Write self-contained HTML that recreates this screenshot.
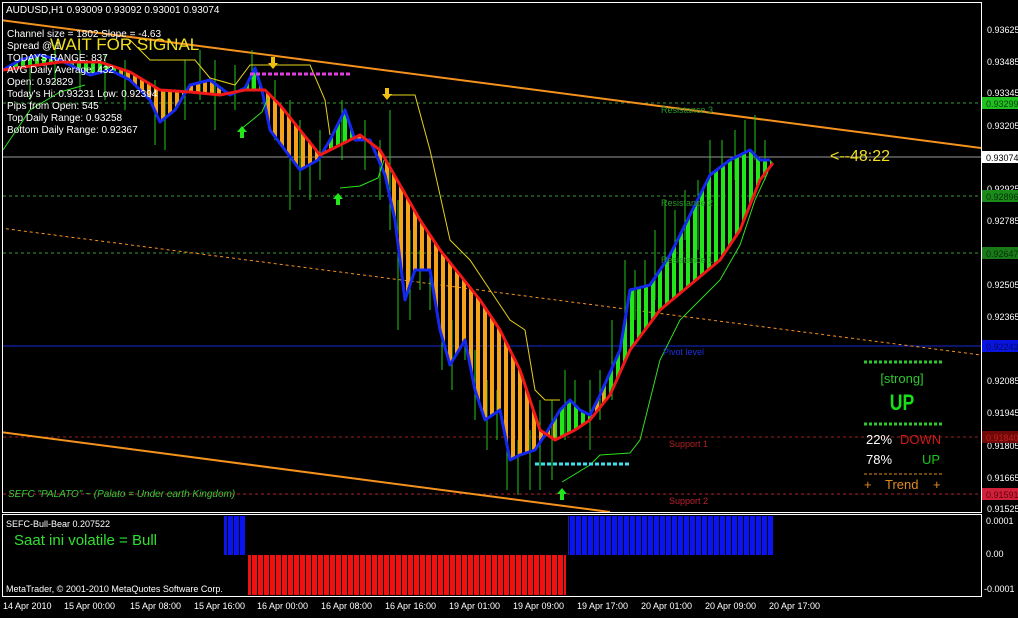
<!DOCTYPE html><html><head><meta charset="utf-8"><style>
body{margin:0;background:#000;width:1018px;height:613px;overflow:hidden;font-family:"Liberation Sans",sans-serif}
svg text{font-family:"Liberation Sans",sans-serif}
</style></head><body>
<svg width="1018" height="613" xmlns="http://www.w3.org/2000/svg">
<defs>
<pattern id="po" width="7" height="10" patternUnits="userSpaceOnUse"><rect width="4" height="10" fill="#f5a21b"/></pattern>
<pattern id="pg" width="7" height="10" patternUnits="userSpaceOnUse"><rect width="4" height="10" fill="#22e51a"/></pattern>
<pattern id="pb" width="6" height="10" patternUnits="userSpaceOnUse"><rect width="5" height="10" fill="#0a14f0"/></pattern>
<pattern id="pr" width="6" height="10" patternUnits="userSpaceOnUse"><rect width="5" height="10" fill="#f01010"/></pattern>
<clipPath id="cg"><rect x="3" y="0" width="117" height="600"/><rect x="225" y="0" width="37" height="600"/><rect x="330" y="0" width="25" height="600"/><rect x="555" y="0" width="40" height="600"/><rect x="605" y="0" width="170" height="600"/></clipPath>
<clipPath id="area"><rect x="3" y="3" width="978" height="509"/></clipPath>
<path id="fillp" d="M3 70L20 60L40 55L60 60L90 75L110 70L130 80L150 100L160 122L175 110L190 85L210 80L230 95L245 88L255 68L262 90L270 130L285 150L300 170L318 160L330 140L345 110L355 140L370 140L385 175L395 220L405 300L415 270L430 270L440 330L450 365L465 340L475 390L485 420L500 410L510 460L520 455L535 450L545 435L560 410L570 400L580 410L590 415L600 395L620 350L630 290L650 285L670 255L690 215L710 175L730 160L750 150L760 160L770 160L773 163L760 180L740 230L720 260L690 285L660 310L630 350L610 395L590 420L575 430L555 440L540 430L520 370L500 330L480 300L460 275L440 250L420 220L400 185L380 150L360 135L340 145L320 155L300 130L280 105L265 90L245 90L220 95L190 92L160 90L130 72L100 62L60 62Z"/>
</defs>
<rect x="2.5" y="2.5" width="979" height="510" fill="none" stroke="#fff"/>
<rect x="2.5" y="514.5" width="979" height="82" fill="none" stroke="#fff"/>
<g clip-path="url(#area)">
<line x1="3" y1="157" x2="981" y2="157" stroke="#999"/>
<line x1="3" y1="103" x2="981" y2="103" stroke="#3a9a3a" stroke-dasharray="3,3"/>
<line x1="3" y1="196" x2="981" y2="196" stroke="#3a9a3a" stroke-dasharray="3,3"/>
<line x1="3" y1="253" x2="981" y2="253" stroke="#3a9a3a" stroke-dasharray="3,3"/>
<line x1="3" y1="346" x2="981" y2="346" stroke="#1a2ad0"/>
<line x1="3" y1="437" x2="981" y2="437" stroke="#9a2020" stroke-dasharray="3,3"/>
<line x1="3" y1="494" x2="981" y2="494" stroke="#b02030" stroke-dasharray="3,3"/>
<line x1="0" y1="20" x2="981" y2="148" stroke="#f5921e" stroke-width="2"/>
<line x1="0" y1="432" x2="610" y2="512" stroke="#f5921e" stroke-width="2"/>
<line x1="0" y1="228" x2="981" y2="355" stroke="#f5921e" stroke-dasharray="3,3"/>
<g stroke="#22c81a" stroke-width="1">
<path d="M30 60V100M55 45V85M80 50V90M105 55V100M125 60V110M155 80V145M165 90V150M185 60V120M200 50V100M215 60V130M235 65V110M252 50V90M275 80V140M290 100V210M300 120V190M310 140V200M320 130V180M342 100V160M365 120V170M380 140V200M390 110V230M398 200V330M410 230V320M420 250V290M430 260V310M442 300V370M452 320V390M465 320V360M475 350V420M487 380V450M497 390V440M507 420V490M518 440V495M530 430V490M540 400V490M552 400V480M565 370V440M575 380V430M590 380V450M600 370V420M612 320V400M625 260V330M635 270V320M645 260V300M655 230V300M665 200V260M675 210V260M685 190V240M698 180V250M710 140V210M722 140V200M735 130V180M745 120V170M755 115V160M765 140V180"/>
</g>
<use href="#fillp" fill="url(#po)"/>
<use href="#fillp" fill="url(#pg)" clip-path="url(#cg)"/>
<path d="M3 70L20 60L40 55L60 60L90 75L110 70L130 80L150 100L160 122L175 110L190 85L210 80L230 95L245 88L255 68L262 90L270 130L285 150L300 170L318 160L330 140L345 110L355 140L370 140L385 175L395 220L405 300L415 270L430 270L440 330L450 365L465 340L475 390L485 420L500 410L510 460L520 455L535 450L545 435L560 410L570 400L580 410L590 415L600 395L620 350L630 290L650 285L670 255L690 215L710 175L730 160L750 150L760 160L770 160" fill="none" stroke="#1428f0" stroke-width="3" stroke-linejoin="round"/>
<path d="M3 70L60 62L100 62L130 72L160 90L190 92L220 95L245 90L265 90L280 105L300 130L320 155L340 145L360 135L380 150L400 185L420 220L440 250L460 275L480 300L500 330L520 370L540 430L555 440L575 430L590 420L610 395L630 350L660 310L690 285L720 260L740 230L760 180L773 163" fill="none" stroke="#f01818" stroke-width="3" stroke-linejoin="round"/>
<path d="M130 40L150 60L195 60L210 78L235 85L250 65L310 65L325 100L330 135M385 95L415 95L430 150L450 240L470 260L490 290L510 320L525 330L535 390L545 400L560 400" fill="none" stroke="#e6d21a" stroke-width="1"/>
<path d="M3 150L30 110L60 92L85 85M240 130L262 112L268 98M340 188L360 186L378 178L384 160M562 482L590 465L600 455L630 453L640 440L650 400L660 360L680 320L700 300L720 280L740 245L755 200L768 172" fill="none" stroke="#2ee020" stroke-width="1"/>
<line x1="250" y1="74" x2="350" y2="74" stroke="#e040e0" stroke-width="3" stroke-dasharray="4,2"/>
<line x1="535" y1="464" x2="630" y2="464" stroke="#40e0f0" stroke-width="3" stroke-dasharray="4,2"/>
<g fill="#f0c010"><path d="M271 57h4v6h3l-5 6-5-6h3z"/><path d="M385 88h4v6h3l-5 6-5-6h3z"/></g>
<g fill="#22e51a"><path d="M242 126l5 6h-3v6h-4v-6h-3z"/><path d="M338 193l5 6h-3v6h-4v-6h-3z"/><path d="M562 488l5 6h-3v6h-4v-6h-3z"/></g>
</g>
<g font-size="10" fill="#fff">
<text x="6" y="13">AUDUSD,H1  0.93009 0.93092 0.93001 0.93074</text>
<text x="7" y="37">Channel size = 1802 Slope = -4.63</text>
<text x="7" y="49">Spread @ 1</text>
<text x="7" y="61">TODAYS RANGE: 837</text>
<text x="7" y="73">AVG Daily Average: 432</text>
<text x="7" y="85">Open: 0.92829</text>
<text x="7" y="97">Today's Hi: 0.93231  Low: 0.92394</text>
<text x="7" y="109">Pips from Open: 545</text>
<text x="7" y="121">Top Daily Range: 0.93258</text>
<text x="7" y="133">Bottom Daily Range: 0.92367</text>
</g>
<text x="50" y="50" font-size="17" fill="#f0e020">WAIT FOR SIGNAL</text>
<g font-size="9">
<text x="661" y="113" fill="#2a9a2a">Resistance 3</text>
<text x="661" y="206" fill="#2a9a2a">Resistance 2</text>
<text x="661" y="263" fill="#2a9a2a">Resistance 1</text>
<text x="663" y="355" fill="#2030e0">Pivot level</text>
<text x="669" y="447" fill="#b02020">Support 1</text>
<text x="669" y="504" fill="#c02030">Support 2</text>
</g>
<text x="830" y="161" font-size="16" fill="#f0e020">&lt;--48:22</text>
<text x="8" y="497" font-size="10" font-style="italic" fill="#3ac83a" font-family="Liberation Serif">SEFC "PALATO" ~ (Palato = Under earth Kingdom)</text>
<line x1="864" y1="362" x2="942" y2="362" stroke="#2ec82e" stroke-width="3" stroke-dasharray="3,2"/>
<line x1="864" y1="424" x2="942" y2="424" stroke="#2ec82e" stroke-width="3" stroke-dasharray="3,2"/>
<line x1="864" y1="474" x2="942" y2="474" stroke="#e08a20" stroke-width="1" stroke-dasharray="3,2"/>
<text x="902" y="383" font-size="13" fill="#2ec82e" text-anchor="middle">[strong]</text>
<text x="902" y="410" font-size="22" font-weight="bold" fill="#18e018" text-anchor="middle" transform="translate(902 0) scale(0.8 1) translate(-902 0)">UP</text>
<text x="866" y="444" font-size="13" fill="#fff">22%</text><text x="900" y="444" font-size="13" fill="#d01818">DOWN</text>
<text x="866" y="464" font-size="13" fill="#fff">78%</text><text x="922" y="464" font-size="13" fill="#18c818">UP</text>
<text x="864" y="489" font-size="13" fill="#e08a20">+</text><text x="885" y="489" font-size="13" fill="#e08a20">Trend</text><text x="933" y="489" font-size="13" fill="#e08a20">+</text>
<g font-size="9" fill="#fff">
<text x="987" y="33">0.93625</text><text x="987" y="65">0.93485</text><text x="987" y="96">0.93345</text><text x="987" y="129">0.93205</text><text x="987" y="192">0.92925</text><text x="987" y="224">0.92785</text><text x="987" y="288">0.92505</text><text x="987" y="320">0.92365</text><text x="987" y="384">0.92085</text><text x="987" y="416">0.91945</text><text x="987" y="449">0.91805</text><text x="987" y="481">0.91665</text><text x="987" y="512">0.91525</text>
</g>
<g font-size="9">
<rect x="982" y="97" width="36" height="12" fill="#20c020"/><text x="986" y="107" fill="#084008">0.93299</text>
<rect x="982" y="151" width="36" height="12" fill="#fff"/><text x="986" y="161" fill="#000">0.93074</text>
<rect x="982" y="190" width="36" height="12" fill="#1a8a1a"/><text x="986" y="200" fill="#063006">0.92896</text>
<rect x="982" y="247" width="36" height="12" fill="#1a7a1a"/><text x="986" y="257" fill="#063006">0.92647</text>
<rect x="982" y="340" width="36" height="12" fill="#0a14e0"/><text x="986" y="350" fill="#000a60">0.92243</text>
<rect x="982" y="431" width="36" height="12" fill="#700808"/><text x="986" y="441" fill="#c02020">0.91840</text>
<rect x="982" y="488" width="36" height="12" fill="#d0203a"/><text x="986" y="498" fill="#600010">0.91591</text>
</g>
<rect x="224" y="516" width="22" height="39" fill="url(#pb)"/>
<rect x="568" y="516" width="206" height="39" fill="url(#pb)"/>
<rect x="248" y="555" width="318" height="40" fill="url(#pr)"/>
<text x="6" y="527" font-size="9" fill="#fff">SEFC-Bull-Bear 0.207522</text>
<text x="14" y="545" font-size="15" fill="#30e030">Saat ini volatile = Bull</text>
<text x="6" y="592" font-size="9" fill="#fff">MetaTrader, © 2001-2010 MetaQuotes Software Corp.</text>
<g font-size="9" fill="#fff"><text x="986" y="524">0.0001</text><text x="986" y="557">0.00</text><text x="984" y="592">-0.0001</text></g>
<g font-size="9" fill="#fff">
<text x="3" y="609">14 Apr 2010</text><text x="64" y="609">15 Apr 00:00</text><text x="130" y="609">15 Apr 08:00</text><text x="194" y="609">15 Apr 16:00</text><text x="257" y="609">16 Apr 00:00</text><text x="321" y="609">16 Apr 08:00</text><text x="385" y="609">16 Apr 16:00</text><text x="449" y="609">19 Apr 01:00</text><text x="513" y="609">19 Apr 09:00</text><text x="577" y="609">19 Apr 17:00</text><text x="641" y="609">20 Apr 01:00</text><text x="705" y="609">20 Apr 09:00</text><text x="769" y="609">20 Apr 17:00</text>
</g>
</svg>
</body></html>
